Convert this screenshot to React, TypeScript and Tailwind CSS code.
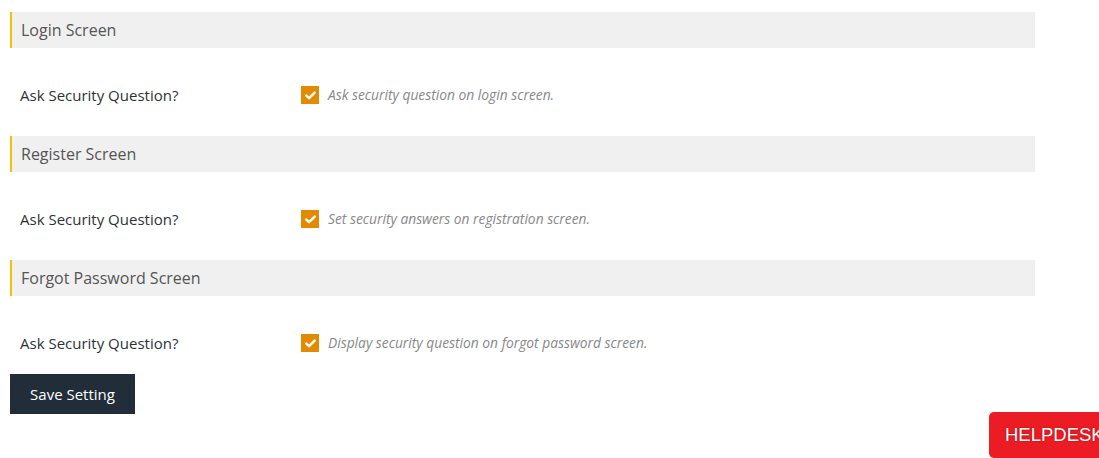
import React from "react";

const sections = [
  { title: "Login Screen", hint: "Ask security question on login screen." },
  { title: "Register Screen", hint: "Set security answers on registration screen." },
  { title: "Forgot Password Screen", hint: "Display security question on forgot password screen." },
];

function CheckBox() {
  return (
    <span className="flex h-[18px] w-[18px] items-center justify-center bg-[#e38b00]">
      <svg width="11" height="9" viewBox="0 0 11 9" fill="none">
        <path d="M1.3 4.6 L4.1 7.2 L9.7 1.6" stroke="#fff" strokeWidth="2.4" strokeLinecap="round" strokeLinejoin="round" />
      </svg>
    </span>
  );
}

export default function App() {
  return (
    <div className="relative h-[458px] w-[1099px] overflow-hidden bg-white font-['Open_Sans',sans-serif]">
      <div className="w-[1035px] pl-[10px] pt-[12px]">
        {sections.map((s, i) => (
          <div key={s.title}>
            <div className="flex h-[36px] items-center border-l-2 border-[#f5c000] bg-[#f0f0f0] pl-[9px] text-[16px] text-[#555]">
              {s.title}
            </div>
            <div className={`flex items-center pt-[36px] ${i === sections.length - 1 ? "pb-[20px]" : "pb-[30px]"}`}>
              <div className="w-[291px] pl-[10px] text-[15px] leading-[22px] text-[#2c3338]">
                Ask Security Question?
              </div>
              <CheckBox />
              <span className="ml-[9px] text-[13.8px] italic leading-[22px] text-[#888]">{s.hint}</span>
            </div>
          </div>
        ))}
        <button className="h-[40px] w-[125px] bg-[#222d3a] text-[15px] text-white">Save Setting</button>
      </div>
      <div className="absolute left-[989px] top-[412px] flex h-[46px] w-[130px] items-center rounded-[5px] bg-[#ec1c24] pl-[16px] font-['Liberation_Sans',Arial,sans-serif] text-[18.5px] text-white [text-shadow:0_0_2px_rgba(120,0,0,0.6)]">
        HELPDESK
      </div>
    </div>
  );
}
